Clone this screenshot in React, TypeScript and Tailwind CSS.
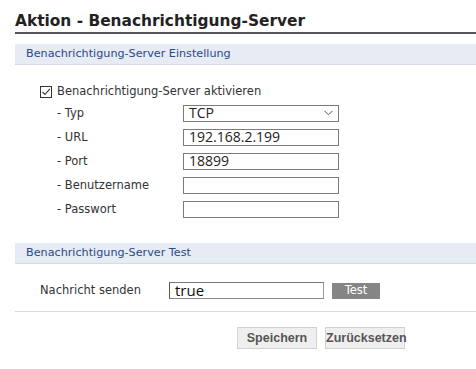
import React from 'react';

const Field: React.FC<{ label: string; value?: string; select?: boolean }> = ({ label, value, select }) => (
  <div className="flex h-[24px] items-center">
    <div className="w-[168px] pl-[42px] pt-[1px] text-[11.5px] text-[#333]">{label}</div>
    <div className="flex h-[17px] w-[156px] items-center justify-between border border-[#7a7a7a] bg-white pl-[5px] pr-[3px] font-['Open_Sans',sans-serif] text-[14px] leading-none text-[#222]">
      <span>{value}</span>
      {select && (
        <svg width="9" height="6" viewBox="0 0 9 6" className="mr-[2px]">
          <path d="M0.5 0.8 L4.5 4.8 L8.5 0.8" fill="none" stroke="#555" strokeWidth="1" />
        </svg>
      )}
    </div>
  </div>
);

const SectionHeader: React.FC<{ title: string }> = ({ title }) => (
  <div className="flex h-[21px] items-center border-b border-[#d6dce6] bg-[#e6ebf4] pl-[11px] text-[11.2px] text-[#2b4a86]">
    {title}
  </div>
);

export default function App() {
  return (
    <div className="h-[369px] w-[476px] overflow-hidden bg-white pl-[15px] font-['DejaVu_Sans',sans-serif]">
      {/* Title */}
      <h1 className="border-b-2 border-[#555] pb-[2px] pt-[12px] text-[15.4px] font-bold leading-[18px] text-[#222]">
        Aktion - Benachrichtigung-Server
      </h1>

      {/* Settings */}
      <div className="mt-[10px]">
        <SectionHeader title="Benachrichtigung-Server Einstellung" />
        <div className="pt-[18px]">
          <div className="flex h-[18px] items-center pl-[25px]">
            <div className="flex h-[12px] w-[12px] items-center justify-center border border-[#333] bg-white">
              <svg width="10" height="10" viewBox="0 0 10 10">
                <path d="M1.5 5 L4 7.5 L8.8 1.8" fill="none" stroke="#333" strokeWidth="1.1" />
              </svg>
            </div>
            <span className="ml-[5px] text-[11.5px] text-[#333]">Benachrichtigung-Server aktivieren</span>
          </div>
          <Field label="- Typ" value="TCP" select />
          <Field label="- URL" value="192.168.2.199" />
          <Field label="- Port" value="18899" />
          <Field label="- Benutzername" />
          <Field label="- Passwort" />
        </div>
      </div>

      {/* Test */}
      <div className="mt-[22px]">
        <SectionHeader title="Benachrichtigung-Server Test" />
        <div className="flex items-center pl-[25px] pt-[18px]">
          <div className="w-[129px] text-[11.5px] text-[#333]">Nachricht senden</div>
          <div className="flex h-[17px] w-[155px] items-end border-l border-t border-b border-r border-l-[#555] border-t-[#777] border-b-[#888] border-r-[#999] bg-white pl-[5px] font-['Open_Sans',sans-serif] text-[15px] leading-[16px] text-[#111]">
            true
          </div>
          <button className="ml-[8px] h-[16px] w-[48px] bg-[#858585] pt-[1px] text-[11.5px] leading-none text-white">
            Test
          </button>
        </div>
        <div className="mt-[12px] border-t border-[#dcdcdc]" />
        <div className="mt-[15px] flex gap-[8px] pl-[222px]">
          <button className="h-[22px] w-[80px] border border-[#d2d2d2] bg-[#efefef] font-['Liberation_Sans',sans-serif] text-[12.5px] font-bold text-[#555]">
            Speichern
          </button>
          <button className="h-[22px] w-[80px] border border-[#d2d2d2] bg-[#efefef] font-['Liberation_Sans',sans-serif] text-[12.5px] font-bold text-[#555]">
            Zurücksetzen
          </button>
        </div>
      </div>
    </div>
  );
}
